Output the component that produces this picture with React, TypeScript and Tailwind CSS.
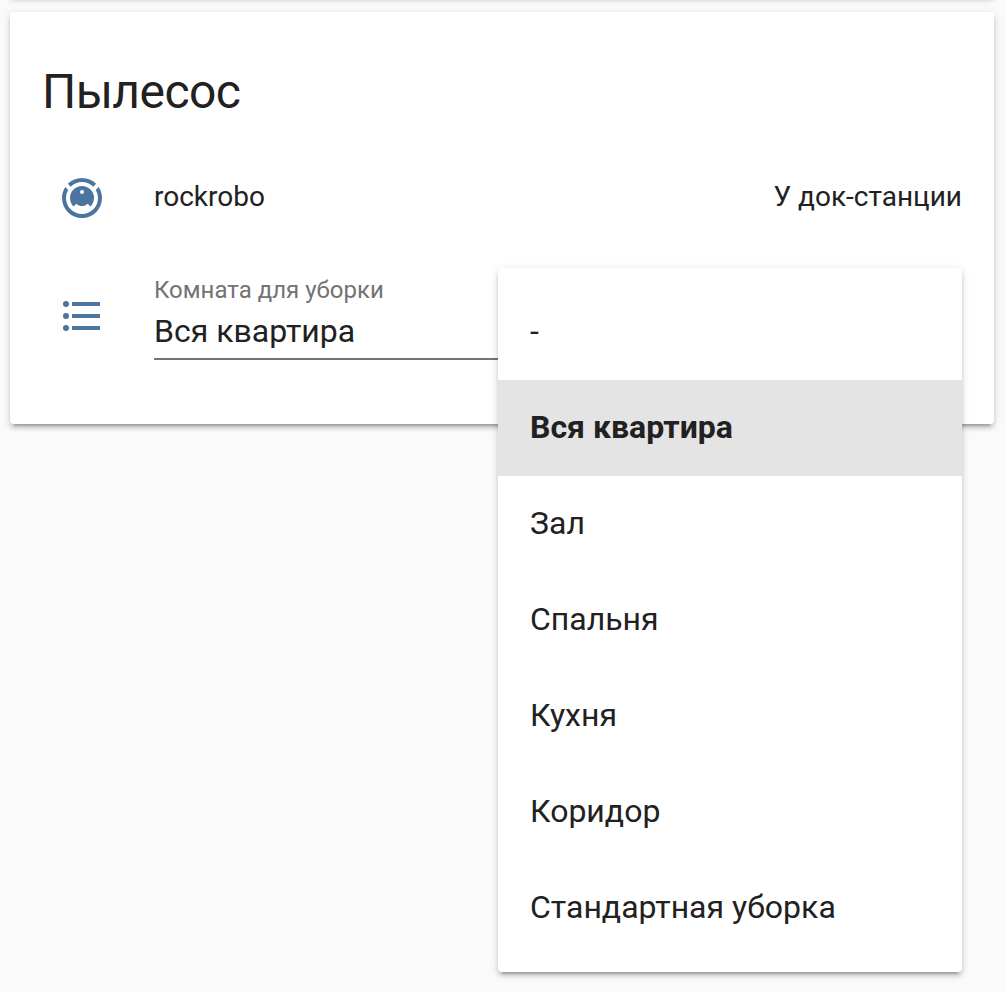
const rooms = ["-", "Вся квартира", "Зал", "Спальня", "Кухня", "Коридор", "Стандартная уборка"];

function VacuumIcon() {
  return (
    <svg viewBox="0 0 24 24" className="h-12 w-12 fill-[#4b759f]">
      <path d="M12,2C14.65,2 17.19,3.06 19.07,4.93L17.65,6.35C16.15,4.85 14.12,4 12,4C9.88,4 7.84,4.84 6.35,6.35L4.93,4.93C6.81,3.06 9.35,2 12,2M3.66,6.5L5.11,7.94C4.39,9.17 4,10.57 4,12A8,8 0 0,0 12,20A8,8 0 0,0 20,12C20,10.57 19.61,9.17 18.88,7.94L20.34,6.5C21.42,8.12 22,10.04 22,12A10,10 0 0,1 12,22A10,10 0 0,1 2,12C2,10.04 2.58,8.12 3.66,6.5M12,6A6,6 0 0,1 18,12C18,13.59 17.37,15.12 16.24,16.24L14.83,14.83C14.08,15.58 13.06,16 12,16C10.94,16 9.92,15.58 9.17,14.83L7.76,16.24C6.63,15.12 6,13.59 6,12A6,6 0 0,1 12,6M12,8A1,1 0 0,0 11,9A1,1 0 0,0 12,10A1,1 0 0,0 13,9A1,1 0 0,0 12,8Z" />
    </svg>
  );
}

function ListIcon() {
  return (
    <svg viewBox="0 0 24 24" className="h-12 w-12 fill-[#4b759f]">
      <path d="M7,5H21V7H7V5M7,13V11H21V13H7M4,4.5A1.5,1.5 0 0,1 5.5,6A1.5,1.5 0 0,1 4,7.5A1.5,1.5 0 0,1 2.5,6A1.5,1.5 0 0,1 4,4.5M4,10.5A1.5,1.5 0 0,1 5.5,12A1.5,1.5 0 0,1 4,13.5A1.5,1.5 0 0,1 2.5,12A1.5,1.5 0 0,1 4,10.5M7,19V17H21V19H7M4,16.5A1.5,1.5 0 0,1 5.5,18A1.5,1.5 0 0,1 4,19.5A1.5,1.5 0 0,1 2.5,18A1.5,1.5 0 0,1 4,16.5Z" />
    </svg>
  );
}

function RoomMenu() {
  return (
    <ul className="absolute top-[256px] left-[488px] w-[464px] rounded-[4px] bg-white py-4 shadow-[0_4px_4px_0_rgba(0,0,0,0.14),0_2px_10px_0_rgba(0,0,0,0.12),0_6px_2px_-4px_rgba(0,0,0,0.2)]">
      {rooms.map((room) => (
        <li
          key={room}
          className={
            room === "Вся квартира"
              ? "flex h-24 items-center bg-[#e4e4e4] px-8 pb-0.5 text-[32px] font-bold"
              : "flex h-24 items-center px-8 pb-0.5 text-[32px]"
          }
        >
          {room}
        </li>
      ))}
    </ul>
  );
}

export default function App() {
  return (
    <div className="h-[992px] overflow-hidden bg-[#fafafa] pr-3 pl-[10px] font-['Roboto',sans-serif] text-[#212121] antialiased">
      <div className="-mt-[84px] h-20 rounded-b-[4px] bg-white shadow-[0_4px_4px_0_rgba(0,0,0,0.14),0_2px_10px_0_rgba(0,0,0,0.12),0_6px_2px_-4px_rgba(0,0,0,0.2)]" />
      <section className="relative mt-4 h-[412px] rounded-[4px] bg-white px-8 pt-12 shadow-[0_4px_4px_0_rgba(0,0,0,0.14),0_2px_10px_0_rgba(0,0,0,0.12),0_6px_2px_-4px_rgba(0,0,0,0.2)]">
        <h1 className="text-[48px] leading-[64px] tracking-[-0.576px]">Пылесос</h1>
        <div className="mt-[34px] flex h-20 items-center text-[28px]">
          <div className="flex w-20 justify-center"><VacuumIcon /></div>
          <span className="ml-8 flex-1 pb-0.5">rockrobo</span>
          <span className="pb-0.5">У док-станции</span>
        </div>
        <div className="mt-6 flex h-[98px]">
          <div className="mt-[30px] flex w-20 justify-center"><ListIcon /></div>
          <div className="ml-8 flex-1 border-b-2 border-[#737373]">
            <div className="mt-3 text-[24px] leading-8 text-[#737373]">Комната для уборки</div>
            <div className="mt-px text-[32px] leading-[48px]">Вся квартира</div>
          </div>
        </div>
        <RoomMenu />
      </section>
    </div>
  );
}
